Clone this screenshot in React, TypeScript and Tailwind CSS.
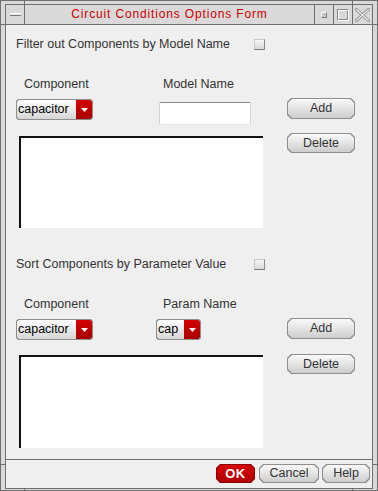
import React from 'react'

const oct =
  '[clip-path:polygon(4px_0,calc(100%_-_4px)_0,100%_4px,100%_calc(100%_-_4px),calc(100%_-_4px)_100%,4px_100%,0_calc(100%_-_4px),0_4px)]'
const octSm =
  '[clip-path:polygon(2px_0,calc(100%_-_2px)_0,100%_2px,100%_calc(100%_-_2px),calc(100%_-_2px)_100%,2px_100%,0_calc(100%_-_2px),0_2px)]'

function PushButton({ label, className }: { label: string; className: string }) {
  return (
    <div className={`${oct} bg-[#8e8e8e] p-px ${className}`}>
      <div
        className={`${oct} h-full flex items-center justify-center bg-linear-to-b from-[#fafafa] to-[#cdcdcd] text-[12.5px] text-[#333]`}
      >
        {label}
      </div>
    </div>
  )
}

function Combo({ value, className }: { value: string; className: string }) {
  return (
    <div className={`${octSm} bg-[#8e8e8e] p-px h-[21px] ${className}`}>
      <div className={`${octSm} flex h-full`}>
        <div className="flex-1 bg-linear-to-b from-white to-[#d6d6d6] text-black text-[12.5px] leading-[19px] pl-px">
          {value}
        </div>
        <div className="w-[16px] bg-linear-to-b from-[#d60000] to-[#a60000] flex items-center justify-center">
          <svg width="7" height="4" viewBox="0 0 7 4">
            <polygon points="0,0 7,0 3.5,4" fill="#fff" />
          </svg>
        </div>
      </div>
    </div>
  )
}

function CheckBox() {
  return (
    <div className="w-[11px] h-[11px] bg-linear-to-b from-[#f6f6f6] to-[#d8d8d8] border border-t-[#c8c8c8] border-l-[#c8c8c8] border-r-[#8a8a8a] border-b-[#7a7a7a]" />
  )
}

function Section({
  title,
  second,
  middle,
  listGap,
  listTop,
  listH,
}: {
  title: string
  second: string
  middle: React.ReactNode
  listGap: string
  listTop: string
  listH: string
}) {
  return (
    <div className="flex flex-col">
      <div className="h-[20px] flex items-center">
        <span className="w-[238px] leading-[20px]">{title}</span>
        <CheckBox />
      </div>

      <div className="mt-[20px] h-[20px] flex leading-[20px]">
        <span className="w-[143px] pl-[8px]">Component</span>
        <span className="pl-[4px]">{second}</span>
      </div>

      <div className="mt-[4px] h-[28px] flex items-start">
        <div className="w-[143px] pt-px">
          <Combo value="capacitor" className="w-[77px]" />
        </div>
        <div className="w-[128px]">{middle}</div>
        <PushButton label="Add" className="w-[68px] h-[21px]" />
      </div>

      <div className={`${listGap} flex items-start`}>
        <div className={`ml-[3px] ${listTop} w-[244px] ${listH} bg-white border-l-2 border-t-2 border-[#111]`} />
        <div className="ml-[24px]">
          <PushButton label="Delete" className="w-[68px] h-[20px]" />
        </div>
      </div>
    </div>
  )
}

export default function App() {
  return (
    <div className="relative w-[378px] h-[491px] bg-[#d9d9d9] border border-[#6f6f6f] pt-[3px] px-[4px] pb-px flex flex-col font-['Liberation_Sans',Arial,sans-serif] text-[12.5px] text-[#333] overflow-hidden">
      {/* frame corner marks */}
      <span className="absolute top-[-1px] left-[23px] w-px h-[4px] bg-[#6f6f6f]" />
      <span className="absolute top-[-1px] left-[351px] w-px h-[4px] bg-[#6f6f6f]" />
      <span className="absolute bottom-[-1px] left-[23px] w-px h-[3px] bg-[#6f6f6f]" />
      <span className="absolute bottom-[-1px] left-[351px] w-px h-[3px] bg-[#6f6f6f]" />
      <span className="absolute top-[23px] left-[-1px] w-[5px] h-px bg-[#6f6f6f]" />
      <span className="absolute top-[23px] right-[-1px] w-[5px] h-px bg-[#6f6f6f]" />
      <span className="absolute top-[463px] left-[-1px] w-[5px] h-px bg-[#6f6f6f]" />
      <span className="absolute top-[463px] right-[-1px] w-[5px] h-px bg-[#6f6f6f]" />

      <div className="flex-1 flex flex-col border border-[#6f6f6f]">
        {/* title bar */}
        <div className="h-[20px] flex border-b border-[#6f6f6f] bg-[#d9d9d9]">
          <div className="w-[19px] border-r border-[#6f6f6f] flex items-center justify-center">
            <div className="w-[11px] h-[3px] bg-[#e4e4e4] border-t border-t-white border-b border-b-[#7a7a7a]" />
          </div>
          <div className="flex-1 flex items-center justify-center text-[#d00000] text-[12px] tracking-[0.85px] leading-[19px]">
            Circuit Conditions Options Form
          </div>
          <div className="w-[19px] border-l border-[#6f6f6f] flex items-center justify-center">
            <div className="w-[6px] h-[6px] bg-[#c4c4c4] border border-t-[#f4f4f4] border-l-[#f4f4f4] border-r-[#7a7a7a] border-b-[#7a7a7a]" />
          </div>
          <div className="w-[19px] border-l border-[#6f6f6f] flex items-center justify-center">
            <div className="w-[12px] h-[12px] border border-t-[#8a8a8a] border-l-[#8a8a8a] border-r-white border-b-white">
              <div className="w-full h-full border border-t-white border-l-white border-r-[#8a8a8a] border-b-[#8a8a8a]" />
            </div>
          </div>
          <div className="w-[20px] border-l border-[#6f6f6f] flex items-center justify-center">
            <svg width="15" height="14" viewBox="0 0 15 14">
              <path d="M1.5 1.5 L13.5 12.5 M13.5 1.5 L1.5 12.5" stroke="#8e8e8e" strokeWidth="3" strokeLinecap="square" />
              <path d="M1.5 1.5 L13.5 12.5 M13.5 1.5 L1.5 12.5" stroke="#f4f4f4" strokeWidth="1.2" strokeLinecap="square" />
            </svg>
          </div>
        </div>

        {/* form body */}
        <div className="flex-1 bg-[#efefef] pl-[10px] pt-[9px] flex flex-col">
          <Section
            title="Filter out Components by Model Name"
            second="Model Name"
            middle={
              <div className="mt-[4px] w-[92px] h-[23px] bg-white rounded-[2px] border-t border-t-[#8a8a8a] border-x border-x-[#d2d2d2] border-b border-b-[#e6e6e6]" />
            }
            listGap="mt-[7px]"
            listTop="mt-[3px]"
            listH="h-[92px]"
          />
          <div className="mt-[26px]">
            <Section
              title="Sort Components by Parameter Value"
              second="Param Name"
              middle={
                <div className="pt-px -ml-[3px]">
                  <Combo value="cap" className="w-[45px]" />
                </div>
              }
              listGap="mt-[8px]"
              listTop="mt-px"
              listH="h-[93px]"
            />
          </div>
        </div>

        {/* button bar */}
        <div className="h-[29px] border-t border-[#6f6f6f] bg-[#efefef] flex justify-end items-start pt-[4px] pr-[2px]">
          <div className={`${oct} bg-[#8a0000] p-px w-[39px] h-[19px]`}>
            <div
              className={`${oct} h-full flex items-center justify-center bg-linear-to-b from-[#d80000] to-[#b00000] text-white font-bold text-[13px] tracking-[0.5px]`}
            >
              OK
            </div>
          </div>
          <PushButton label="Cancel" className="ml-[4px] w-[60px] h-[19px]" />
          <PushButton label="Help" className="ml-[3px] w-[48px] h-[19px]" />
        </div>
      </div>
    </div>
  )
}
